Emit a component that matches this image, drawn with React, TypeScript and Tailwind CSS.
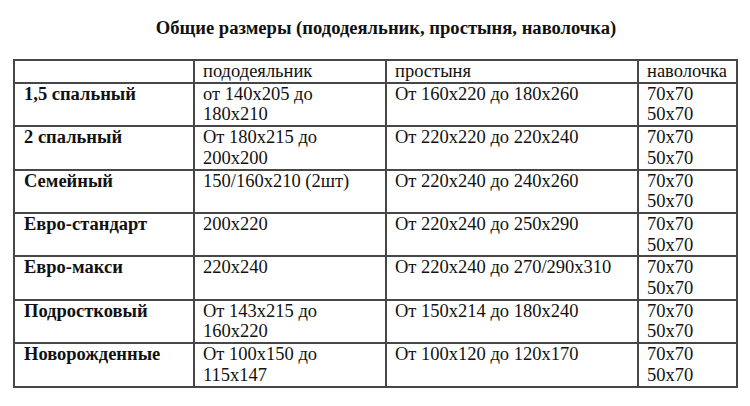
const rows: { name: string; duvet: string[]; sheet: string; pillow: string[] }[] = [
  { name: '1,5 спальный', duvet: ['от 140x205 до', '180x210'], sheet: 'От 160x220 до 180x260', pillow: ['70x70', '50x70'] },
  { name: '2 спальный', duvet: ['От 180x215 до', '200x200'], sheet: 'От 220x220 до 220x240', pillow: ['70x70', '50x70'] },
  { name: 'Семейный', duvet: ['150/160x210 (2шт)'], sheet: 'От 220x240 до 240x260', pillow: ['70x70', '50x70'] },
  { name: 'Евро-стандарт', duvet: ['200x220'], sheet: 'От 220x240 до 250x290', pillow: ['70x70', '50x70'] },
  { name: 'Евро-макси', duvet: ['220x240'], sheet: 'От 220x240 до 270/290x310', pillow: ['70x70', '50x70'] },
  { name: 'Подростковый', duvet: ['От 143x215 до', '160x220'], sheet: 'От 150x214 до 180x240', pillow: ['70x70', '50x70'] },
  { name: 'Новорожденные', duvet: ['От 100x150 до', '115x147'], sheet: 'От 100x120 до 120x170', pillow: ['70x70', '50x70'] },
]

const cell = 'border-2 border-[#474747] px-2 py-0 align-top'

export default function App() {
  return (
    <div className="h-[406px] w-[750px] bg-white text-[#111] font-['Liberation_Serif',serif]">
      {/* Title */}
      <div className="h-[59px] pt-[17px] text-center">
        <h1 className="pl-[22px] text-[18.6px] font-bold leading-[21.5px]">
          Общие размеры (пододеяльник, простыня, наволочка)
        </h1>
      </div>

      {/* Sizes table */}
      <table className="ml-[13px] w-[725px] table-fixed border-collapse text-[18.5px] leading-[20.7px]">
        <colgroup>
          <col className="w-[180px]" />
          <col className="w-[192px]" />
          <col className="w-[252px]" />
          <col className="w-[99px]" />
        </colgroup>
        <thead>
          <tr>
            <th className={cell}></th>
            <th className={`${cell} text-left font-normal`}>пододеяльник</th>
            <th className={`${cell} text-left font-normal`}>простыня</th>
            <th className={`${cell} text-left font-normal`}>наволочка</th>
          </tr>
        </thead>
        <tbody>
          {rows.map((r) => (
            <tr key={r.name}>
              <td className={`${cell} pl-[9px] font-bold`}>{r.name}</td>
              <td className={cell}>
                {r.duvet.map((line) => (
                  <div key={line}>{line}</div>
                ))}
              </td>
              <td className={cell}>{r.sheet}</td>
              <td className={cell}>
                {r.pillow.map((line) => (
                  <div key={line}>{line}</div>
                ))}
              </td>
            </tr>
          ))}
        </tbody>
      </table>
    </div>
  )
}
